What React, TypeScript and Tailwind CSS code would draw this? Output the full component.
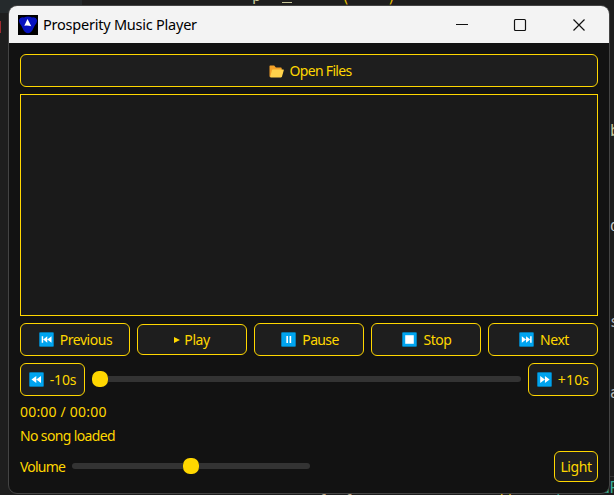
import type { ReactNode } from "react";

type Glyph = "previous" | "pause" | "stop" | "next" | "rewind" | "forward";

const shapes: Record<Glyph, string> = {
  previous: "M2.5 4h1.4v6H2.5z M7.7 4v6L3.9 7z M11.7 4v6L7.7 7z",
  pause: "M5 3.8h1.5v6.4H5z M8 3.8h1.5v6.4H8z",
  stop: "M3 3h8v8H3z",
  next: "M2.6 4v6l4-3z M6.6 4v6l3.9-3z M10.4 4h1.4v6h-1.4z",
  rewind: "M6.8 3.8v6.4L2.3 7z M11.2 3.8v6.4L6.8 7z",
  forward: "M3 3.8v6.4L7.4 7z M7.4 3.8v6.4L11.8 7z",
};

function MediaIcon({ glyph }: { glyph: Glyph }) {
  return (
    <svg className="size-[15px] shrink-0" viewBox="0 0 14 14">
      <rect x="0.2" y="0.2" width="13.6" height="13.6" rx="1.2" fill="#00a4ef" stroke="#075f88" strokeWidth="0.4" />
      <path d={shapes[glyph]} fill="#fff" />
    </svg>
  );
}

function Button({ children, className }: { children: ReactNode; className: string }) {
  return (
    <button className={`flex items-center justify-center whitespace-pre rounded-[6px] border border-[#ffd700] bg-[#1e1e1e] ${className}`}>
      {children}
    </button>
  );
}

function CodeFragment({ children, className }: { children: ReactNode; className: string }) {
  return <span className={`absolute whitespace-pre font-['DejaVu_Sans_Mono',monospace] text-[15px] leading-4 ${className}`}>{children}</span>;
}

function Editor() {
  return (
    <div className="absolute inset-0">
      <div className="absolute left-0 top-0 h-[13px] w-[82px] bg-[#252a2c]" />
      <div className="absolute left-0 top-[21px] h-[12px] w-px bg-[#a02b30]" />
      <CodeFragment className="left-[252px] top-[-12px] text-[#c8c79b]">p</CodeFragment>
      <div className="absolute left-[282px] top-[2px] h-px w-[10px] bg-[#c8c79b]" />
      <CodeFragment className="left-[341px] top-[-11px] text-[#e5bd00]">(</CodeFragment>
      <CodeFragment className="left-[387px] top-[-11px] text-[#e5bd00]">)</CodeFragment>
      <CodeFragment className="left-[610px] top-[123px] text-[#c8c79b]">b</CodeFragment>
      <CodeFragment className="left-[610px] top-[218px] text-[#c8c8c8]">d</CodeFragment>
      <CodeFragment className="left-[610px] top-[314px] text-[#b8b8b8]">s</CodeFragment>
      <CodeFragment className="left-[610px] top-[385px] text-[#b8b8b8]">a</CodeFragment>
      <div className="absolute left-[609px] top-[476px] h-px w-[5px] bg-[#343434]" />
      <CodeFragment className="left-[601px] top-[480px] text-[#38a995]">dP</CodeFragment>
      <CodeFragment className="left-[318px] top-[482px] text-[#bda785]">l  l</CodeFragment>
      <CodeFragment className="left-[497px] top-[482px] text-[#e5bd00]">()</CodeFragment>
      <CodeFragment className="left-[554px] top-[482px] text-[#38a995]">f</CodeFragment>
    </div>
  );
}

function AppIcon() {
  return (
    <svg className="size-5" viewBox="0 0 20 20">
      <path d="M0 0h20v20H0z" fill="#000" />
      <path d="M1 5Q2 1.5 6 2.5Q10 .5 14 2.5Q18 1.5 19 5Q19.5 8 16.5 11L14 16Q10 20.5 6 16L3.5 11Q.5 8 1 5Z" fill="#0712bf" />
      <path d="M9.5 4L13.3 11.3Q10 10.3 6.3 10.7Z" fill="#fff" />
    </svg>
  );
}

function FolderIcon() {
  return (
    <svg className="mt-px h-[13px] w-[15px] shrink-0" viewBox="0 0 15 13">
      <path d="M.5 1Q.5.4 1.2.4h4l1.7 2h5q.8 0 .8.8v8.9H1.3Q.5 12.1.5 11.3z" fill="#f4a128" />
      <path d="M3.8 4.5h10.5q.7 0 .5.7l-1.8 6.4q-.2.8-1 .8H1.8q-.7 0-.5-.7l1.6-6.5q.2-.7.9-.7z" fill="#ffd34c" />
    </svg>
  );
}

export default function App() {
  return (
    <main className="relative h-[495px] w-[614px] overflow-hidden bg-[#1e1e1e] font-['Noto_Sans',sans-serif] text-[14px] tracking-[-0.45px] text-[#ffd700]">
      <Editor />
      <section className="absolute left-[8px] top-[5px] flex h-[489px] w-[602px] flex-col overflow-hidden rounded-[9px] border border-[#444] bg-[#121212]">
        <header className="flex h-[37px] shrink-0 items-center bg-[#f3f3f3] pl-[9px] text-black">
          <AppIcon />
          <h1 className="ml-[5px] text-[14.5px] tracking-[-0.23px]">Prosperity Music Player</h1>
          <svg className="ml-auto mr-[23px] h-5 w-[132px]" viewBox="0 0 132 20" fill="none" stroke="#111" strokeWidth="1.2">
            <path d="M2 9.5h12" strokeWidth="1" />
            <rect x="60.5" y="4.5" width="11" height="11" rx="1" />
            <path d="m119.5 4.5 11 11M130.5 4.5l-11 11" />
          </svg>
        </header>
        <div className="flex flex-1 flex-col pl-[11px] pr-[11px] pt-[11px]">
          <Button className="h-[33px] w-full gap-[6px] pl-[2px] tracking-[-0.7px]"><FolderIcon /><span>Open Files</span></Button>
          <div className="mt-[7px] h-[222px] border border-[#ffd700] bg-[#1a1a1a]" />
          <div className="mt-[7px] grid h-[33px] grid-cols-5 items-center gap-[7px]">
            <Button className="h-[33px] gap-[6px] pl-px"><MediaIcon glyph="previous" /><span>Previous</span></Button>
            <Button className="h-[31px] gap-[4px]">
              <svg className="h-[8px] w-[6px]" viewBox="0 0 6 8"><path d="M0 1l6 3-6 3z" fill="#ffd700" /></svg><span>Play</span>
            </Button>
            <Button className="h-[33px] gap-[6px] pl-[2px] tracking-[-0.65px]"><MediaIcon glyph="pause" /><span>Pause</span></Button>
            <Button className="h-[33px] gap-[6px] pl-[2px]"><MediaIcon glyph="stop" /><span>Stop</span></Button>
            <Button className="h-[33px] gap-[6px] pl-[2px]"><MediaIcon glyph="next" /><span>Next</span></Button>
          </div>
          <div className="mt-[7px] flex h-[33px] items-start">
            <Button className="h-[33px] w-[65px] gap-[6px] tracking-[-0.15px]"><MediaIcon glyph="rewind" /><span>-10s</span></Button>
            <div className="mx-[7px] mt-[8px] flex h-[16px] flex-1 items-center">
              <div className="size-[16px] rounded-[7px] bg-[#ffd700]" />
              <div className="h-[6px] flex-1 rounded-r-[3px] bg-[#333]" />
            </div>
            <Button className="h-[33px] w-[70px] gap-[6px] tracking-[0.2px]"><MediaIcon glyph="forward" /><span>+10s</span></Button>
          </div>
          <p className="mt-[7px] h-[17px] leading-[17px] tracking-[0.2px]">00:00 / 00:00</p>
          <p className="mt-[7px] h-[17px] leading-[17px] tracking-[-0.63px]">No song loaded</p>
          <div className="mt-[7px] flex h-[31px] items-start">
            <span className="w-[52px] leading-[31px] tracking-[-0.8px]">Volume</span>
            <div className="mt-[7px] flex h-[16px] w-[238px] items-center">
              <div className="h-[6px] w-[111px] rounded-l-[3px] bg-[#333]" />
              <div className="size-[16px] rounded-[7px] bg-[#ffd700]" />
              <div className="h-[6px] flex-1 rounded-r-[3px] bg-[#333]" />
            </div>
            <Button className="ml-auto h-[31px] w-[44px]"><span>Light</span></Button>
          </div>
        </div>
      </section>
    </main>
  );
}
